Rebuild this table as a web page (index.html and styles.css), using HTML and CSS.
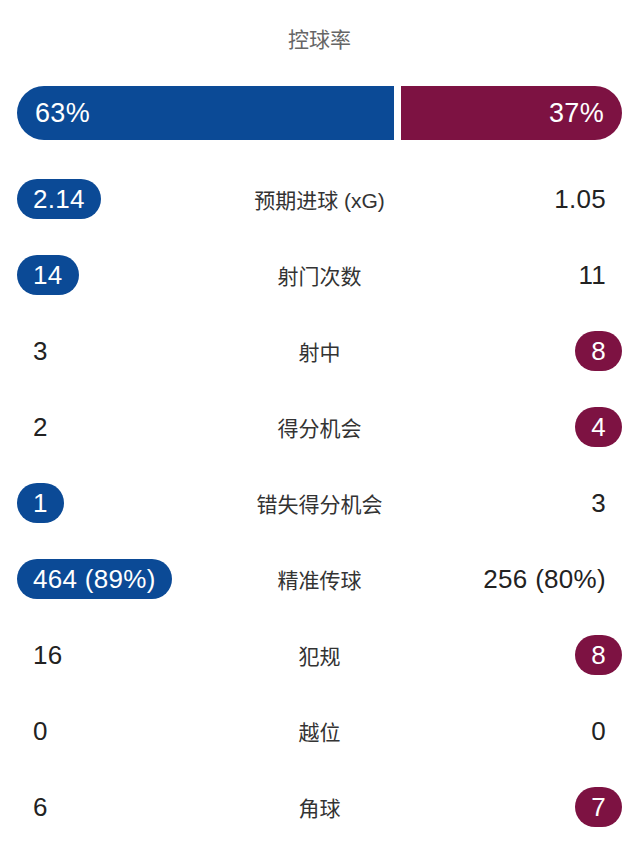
FILE: index.html
```html
<!DOCTYPE html>
<html lang="zh">
<head>
<meta charset="utf-8">
<title>比赛数据</title>
<link rel="stylesheet" href="styles.css">
</head>
<body>
<main class="stats">
  <h2 class="title">控球率</h2>
  <div class="possession">
    <div class="seg seg-home" style="--share: 63">63%</div>
    <div class="seg seg-away" style="--share: 37">37%</div>
  </div>
  <div class="rows">
    <div class="row"><div class="val home"><span class="pill pill-home">2.14</span></div><div class="label">预期进球 (xG)</div><div class="val away"><span class="pill">1.05</span></div></div>
    <div class="row"><div class="val home"><span class="pill pill-home">14</span></div><div class="label">射门次数</div><div class="val away"><span class="pill">11</span></div></div>
    <div class="row"><div class="val home"><span class="pill">3</span></div><div class="label">射中</div><div class="val away"><span class="pill pill-away">8</span></div></div>
    <div class="row"><div class="val home"><span class="pill">2</span></div><div class="label">得分机会</div><div class="val away"><span class="pill pill-away">4</span></div></div>
    <div class="row"><div class="val home"><span class="pill pill-home">1</span></div><div class="label">错失得分机会</div><div class="val away"><span class="pill">3</span></div></div>
    <div class="row"><div class="val home"><span class="pill pill-home">464 (89%)</span></div><div class="label">精准传球</div><div class="val away"><span class="pill">256 (80%)</span></div></div>
    <div class="row"><div class="val home"><span class="pill">16</span></div><div class="label">犯规</div><div class="val away"><span class="pill pill-away">8</span></div></div>
    <div class="row"><div class="val home"><span class="pill">0</span></div><div class="label">越位</div><div class="val away"><span class="pill">0</span></div></div>
    <div class="row"><div class="val home"><span class="pill">6</span></div><div class="label">角球</div><div class="val away"><span class="pill pill-away">7</span></div></div>
  </div>
</main>
</body>
</html>
```
FILE: styles.css
```css
* { box-sizing: border-box; }
html, body { margin: 0; padding: 0; background: #ffffff; }
body {
  font-family: "Liberation Sans", "Noto Sans CJK SC", sans-serif;
  color: #222;
}
.stats {
  padding: 25px 18px 0 17px;
}
.title {
  margin: 0;
  font-family: "Liberation Sans", "Noto Sans CJK SC", sans-serif;
  font-weight: 400;
  font-size: 21px;
  line-height: 30px;
  color: #666;
  text-align: center;
}
.possession {
  margin-top: 31px;
  display: flex;
  gap: 7px;
  height: 54px;
}
.seg {
  flex: 0 0 calc((100% - 7px) * var(--share) / 100);
  display: flex;
  align-items: center;
  color: #fff;
  font-size: 27px;
  line-height: 1;
  letter-spacing: 0.3px;
}
.seg-home {
  background: #0b4a96;
  border-radius: 27px 0 0 27px;
  padding-left: 18px;
}
.seg-away {
  background: #7d1242;
  border-radius: 0 27px 27px 0;
  justify-content: flex-end;
  padding-right: 18px;
}
.rows {
  margin-top: 21px;
}
.row {
  display: grid;
  grid-template-columns: 1fr auto 1fr;
  align-items: center;
  height: 76px;
}
.val { display: flex; }
.val.away { justify-content: flex-end; }
.pill {
  display: inline-block;
  min-width: 46px;
  height: 40px;
  line-height: 40px;
  padding: 0 16px;
  border-radius: 20px;
  font-size: 26px;
  letter-spacing: 0.3px;
  color: #222;
  text-align: center;
  white-space: nowrap;
}
.pill-home { background: #0b4a96; color: #fff; }
.pill-away { background: #7d1242; color: #fff; }
.label {
  font-size: 21px;
  color: #333;
  text-align: center;
  white-space: nowrap;
}
```
